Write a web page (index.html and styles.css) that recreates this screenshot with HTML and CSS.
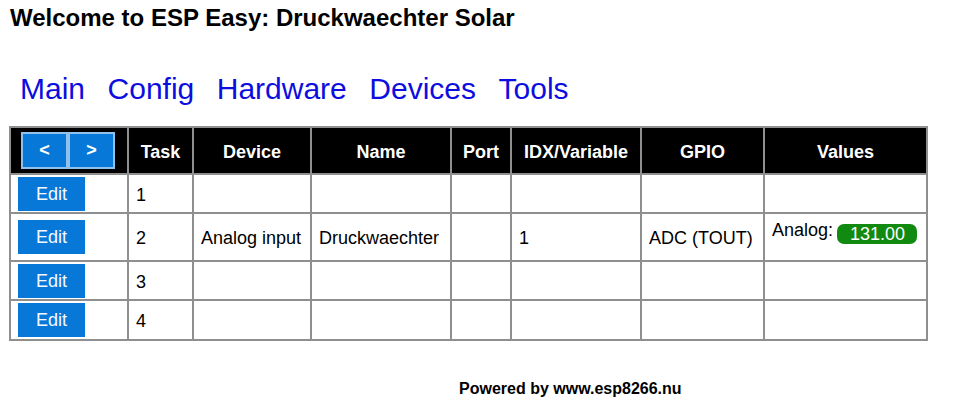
FILE: index.html
```html
<!DOCTYPE html>
<html>
<head>
<meta charset="utf-8">
<title>ESP Easy</title>
<link rel="stylesheet" href="styles.css">
</head>
<body>
<h1 class="title">Welcome to ESP Easy: Druckwaechter Solar</h1>
<nav class="menu">
  <a class="menu-link" href="#">Main</a>
  <a class="menu-link" href="#">Config</a>
  <a class="menu-link" href="#">Hardware</a>
  <a class="menu-link" href="#">Devices</a>
  <a class="menu-link" href="#">Tools</a>
</nav>
<table class="devices">
  <colgroup>
    <col class="c-edit"><col class="c-task"><col class="c-device"><col class="c-name"><col class="c-port"><col class="c-idx"><col class="c-gpio"><col class="c-values">
  </colgroup>
  <tr class="head">
    <th class="pager-cell"><span class="pager"><a class="page-btn" href="#">&lt;</a><a class="page-btn" href="#">&gt;</a></span></th>
    <th>Task</th><th>Device</th><th>Name</th><th>Port</th><th>IDX/Variable</th><th>GPIO</th><th>Values</th>
  </tr>
  <tr class="row r1">
    <td class="edit-cell"><a class="edit-btn" href="#">Edit</a></td><td>1</td><td></td><td></td><td></td><td></td><td></td><td></td>
  </tr>
  <tr class="row r2">
    <td class="edit-cell"><a class="edit-btn" href="#">Edit</a></td><td>2</td><td>Analog input</td><td>Druckwaechter</td><td></td><td>1</td><td>ADC (TOUT)</td>
    <td class="values"><div class="val-line"><span class="val-label">Analog:</span><span class="val-badge">131.00</span></div></td>
  </tr>
  <tr class="row r3">
    <td class="edit-cell"><a class="edit-btn" href="#">Edit</a></td><td>3</td><td></td><td></td><td></td><td></td><td></td><td></td>
  </tr>
  <tr class="row r4">
    <td class="edit-cell"><a class="edit-btn" href="#">Edit</a></td><td>4</td><td></td><td></td><td></td><td></td><td></td><td></td>
  </tr>
</table>
<footer class="footer">Powered by www.esp8266.nu</footer>
</body>
</html>
```
FILE: styles.css
```css
html, body {
  margin: 0;
  padding: 0;
  background: #fff;
}
body {
  padding: 0 9px;
  font-family: "Liberation Sans", Arial, Helvetica, sans-serif;
  font-size: 18px;
  color: #000;
}
.title {
  margin: 4px 0 0;
  font-size: 24px;
  line-height: 28px;
  font-weight: bold;
  padding-left: 1px;
}
.menu {
  display: flex;
  gap: 22.5px;
  margin: 40px 0 0;
  padding-left: 11px;
  font-size: 30px;
  line-height: 34px;
}
.menu-link {
  color: #0d0de0;
  text-decoration: none;
}
.devices {
  margin-top: 20px;
  border-collapse: collapse;
  table-layout: fixed;
  width: 917px;
}
.c-edit { width: 118px; }
.c-task { width: 65px; }
.c-device { width: 118px; }
.c-name { width: 140px; }
.c-port { width: 60px; }
.c-idx { width: 130px; }
.c-gpio { width: 123px; }
.c-values { width: 163px; }
.devices th,
.devices td {
  border: 2px solid #8f8f8f;
  padding: 3px 7px 0;
  line-height: 21px;
  vertical-align: middle;
  white-space: nowrap;
}
.devices th {
  background: #000;
  color: #fff;
  font-weight: bold;
  text-align: center;
}
.head { height: 47px; }
.r1 { height: 39px; }
.r2 { height: 48px; }
.r3 { height: 39px; }
.r4 { height: 40px; }
.devices th.pager-cell {
  text-align: left;
  padding: 0 0 0 10px;
}
.pager {
  display: flex;
}
.page-btn {
  display: block;
  width: 43px;
  height: 33px;
  line-height: 33px;
  text-align: center;
  background: #0878d8;
  border: 2px solid #8fc0ee;
  color: #fff;
  text-decoration: none;
  font-weight: bold;
}
.devices td.edit-cell {
  padding: 0 7px;
}
.edit-btn {
  display: block;
  width: 67px;
  height: 34px;
  line-height: 34px;
  text-align: center;
  background: #0878d8;
  color: #f4f8ff;
  text-decoration: none;
}
.devices td.values {
  vertical-align: top;
  padding-top: 6px;
  padding-left: 7px;
  padding-right: 9px;
}
.val-line {
  display: flex;
  justify-content: space-between;
  align-items: flex-start;
}
.val-badge {
  margin-top: 4px;
  padding: 0 12px 0 13px;
  height: 20px;
  line-height: 20px;
  background: #118a11;
  color: #fff;
  border-radius: 7px;
}
.footer {
  margin-top: 39px;
  padding-left: 450px;
  font-size: 16px;
  line-height: 18px;
  font-weight: bold;
}
```
